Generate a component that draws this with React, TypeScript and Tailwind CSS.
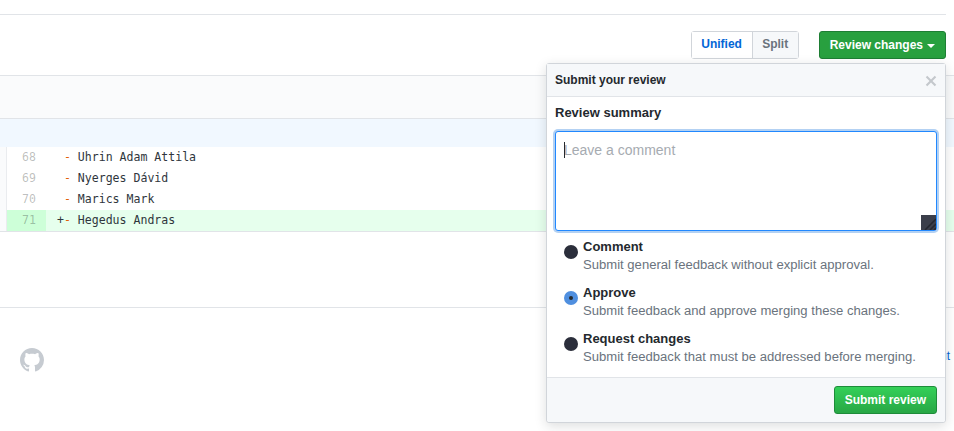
import React from 'react'

const sans = { fontFamily: '"Liberation Sans", Arial, sans-serif' }

const lines = [
  { n: 68, text: 'Uhrin Adam Attila' },
  { n: 69, text: 'Nyerges Dávid' },
  { n: 70, text: 'Marics Mark' },
  { n: 71, text: 'Hegedus Andras', added: true },
]

const options = [
  { title: 'Comment', desc: 'Submit general feedback without explicit approval.' },
  { title: 'Approve', desc: 'Submit feedback and approve merging these changes.', checked: true },
  { title: 'Request changes', desc: 'Submit feedback that must be addressed before merging.' },
]

function DiffLine({ n, text, added }: { n: number; text: string; added?: boolean }) {
  return (
    <div className={`flex h-[21px] font-['DejaVu_Sans_Mono',monospace] text-[11.55px] leading-[21px] ${added ? 'bg-[#e6ffed]' : 'bg-white'}`}>
      <div className="w-[7px] shrink-0 border-r border-[#eaecef] bg-[#fafbfc]" />
      <div className={`w-[39px] shrink-0 pl-[15px] text-[rgba(27,31,35,0.3)] ${added ? 'bg-[#cdffd8]' : ''}`}>{n}</div>
      <div className="whitespace-pre pl-[11px] text-[#2f363d]">
        <span>{added ? '+' : ' '}</span>
        <span className="text-[#e36209]">-</span>
        {' ' + text}
      </div>
    </div>
  )
}

function ReviewOption({ title, desc, checked }: { title: string; desc: string; checked?: boolean }) {
  return (
    <div className="flex h-[46px] pl-[17px]">
      <div className="w-[19px] shrink-0 pt-[7px]">
        {checked ? (
          <div className="flex h-[14px] w-[14px] items-center justify-center rounded-full bg-[#4f8fdf]">
            <div className="h-[4px] w-[4px] rounded-full bg-[#24292e]" />
          </div>
        ) : (
          <div className="h-[14px] w-[14px] rounded-full bg-[#2b2e3b]" />
        )}
      </div>
      <div>
        <div className="text-[13px] font-bold leading-[18px] text-[#24292e]">{title}</div>
        <div className="text-[13.08px] leading-[18px] text-[#6a737d]">{desc}</div>
      </div>
    </div>
  )
}

export default function App() {
  return (
    <div className="relative h-[431px] w-[954px] overflow-hidden bg-white" style={sans}>
      <div className="pt-[14px] pr-[8px]">
        <div className="border-t border-[#e1e4e8]" />
        <div className="flex h-[60px] items-start justify-end pt-[16px]">
          <div className="flex h-[28px] rounded-[3px] border border-[#d1d5da] text-center text-[12px] font-bold leading-[25px]">
            <div className="w-[61px] border-r border-[#d1d5da] bg-white text-[#0366d6]">Unified</div>
            <div className="w-[45px] bg-[#f6f8fa] text-[#6a737d]">Split</div>
          </div>
          <div className="ml-[20px] flex h-[28px] items-center rounded-[3px] border border-[#1e7e34] bg-[#28a03f] px-[10px] pb-[1px] text-[12px] font-bold text-white">
            Review changes
            <span className="ml-[4px] mt-[2px] h-0 w-0 border-x-[4px] border-t-[4px] border-x-transparent border-t-white" />
          </div>
        </div>
      </div>

      <div className="border-y border-[#e1e4e8]">
        <div className="h-[43px] border-b border-[#e1e4e8] bg-[#fafbfc]" />
        <div className="h-[28px] bg-[#f1f8ff]" />
        {lines.map((l) => (
          <DiffLine key={l.n} {...l} />
        ))}
      </div>

      <div className="mt-[75px] border-t border-[#e1e4e8] pt-[40px] pl-[20px]">
        <svg viewBox="0 0 16 16" width="24" height="24" fill="#c6cbd1">
          <path
            fillRule="evenodd"
            d="M8 0C3.58 0 0 3.58 0 8c0 3.54 2.29 6.53 5.47 7.59.4.07.55-.17.55-.38 0-.19-.01-.82-.01-1.49-2.01.37-2.53-.49-2.69-.94-.09-.23-.48-.94-.82-1.13-.28-.15-.68-.52-.01-.53.63-.01 1.08.58 1.23.82.72 1.21 1.87.87 2.33.66.07-.52.28-.87.51-1.07-1.78-.2-3.64-.89-3.64-3.95 0-.87.31-1.59.82-2.15-.08-.2-.36-1.02.08-2.12 0 0 .67-.21 2.2.82.64-.18 1.32-.27 2-.27.68 0 1.36.09 2 .27 1.53-1.04 2.2-.82 2.2-.82.44 1.1.16 1.92.08 2.12.51.56.82 1.27.82 2.15 0 3.07-1.87 3.75-3.65 3.95.29.25.54.73.54 1.48 0 1.07-.01 1.93-.01 2.2 0 .21.15.46.55.38A8.013 8.013 0 0 0 16 8c0-4.42-3.58-8-8-8z"
          />
        </svg>
      </div>

      {/* footer link, mostly hidden behind the popover */}
      <div className="absolute left-[940px] top-[347px] text-[12px] leading-[18px] text-[#0366d6]">ut</div>

      <div className="absolute left-[546px] top-[63px] w-[400px] rounded-[3px] border border-[#d1d5da] bg-white shadow-[0_3px_12px_rgba(27,31,35,0.15)]">
        <div className="flex h-[33px] items-center justify-between border-b border-[#e1e4e8] bg-[#f6f8fa] pb-[1px] pl-[8px] pr-[8px]">
          <span className="text-[12px] font-bold text-[#24292e]">Submit your review</span>
          <svg viewBox="0 0 12 16" width="12" height="16" fill="#c4c8cc" className="mt-[2px]">
            <path
              fillRule="evenodd"
              d="M7.48 8l3.75 3.75-1.48 1.48L6 9.48l-3.75 3.75-1.48-1.48L4.52 8 .77 4.25l1.48-1.48L6 6.52l3.75-3.75 1.48 1.48L7.48 8z"
            />
          </svg>
        </div>
        <div className="px-[8px] pt-[7px]">
          <div className="text-[13px] font-bold leading-[18px] text-[#24292e]">Review summary</div>
          <div className="relative mt-[9px] h-[100px] w-[382px] rounded-[3px] border border-[#2188ff] bg-white pl-[8px] pt-[8px] text-[14px] leading-[20px] text-[#a6abb1] shadow-[0_0_0_2px_rgba(3,102,214,0.3)]">
            <span className="absolute left-[8px] top-[10px] h-[16px] w-px bg-[#24292e]" />
            Leave a comment
            <svg className="absolute bottom-0 right-0" width="15" height="15" viewBox="0 0 15 15">
              <rect width="15" height="15" fill="#3b3e4a" />
              <path d="M15 4L4 15M15 9L9 15M15 13L13 15" stroke="#24262f" strokeWidth="1.5" />
            </svg>
          </div>
        </div>
        <div className="pt-[7px]">
          {options.map((o) => (
            <ReviewOption key={o.title} {...o} />
          ))}
        </div>
        <div className="mt-[1px] flex h-[45px] items-start justify-end rounded-b-[3px] border-t border-[#e1e4e8] bg-[#f6f8fa] pr-[8px] pt-[8px]">
          <div className="flex h-[28px] items-center rounded-[3px] border border-[#1e8c3a] bg-gradient-to-b from-[#34d058] to-[#28a745] px-[10px] text-[12px] font-bold text-white">
            Submit review
          </div>
        </div>
      </div>
    </div>
  )
}
